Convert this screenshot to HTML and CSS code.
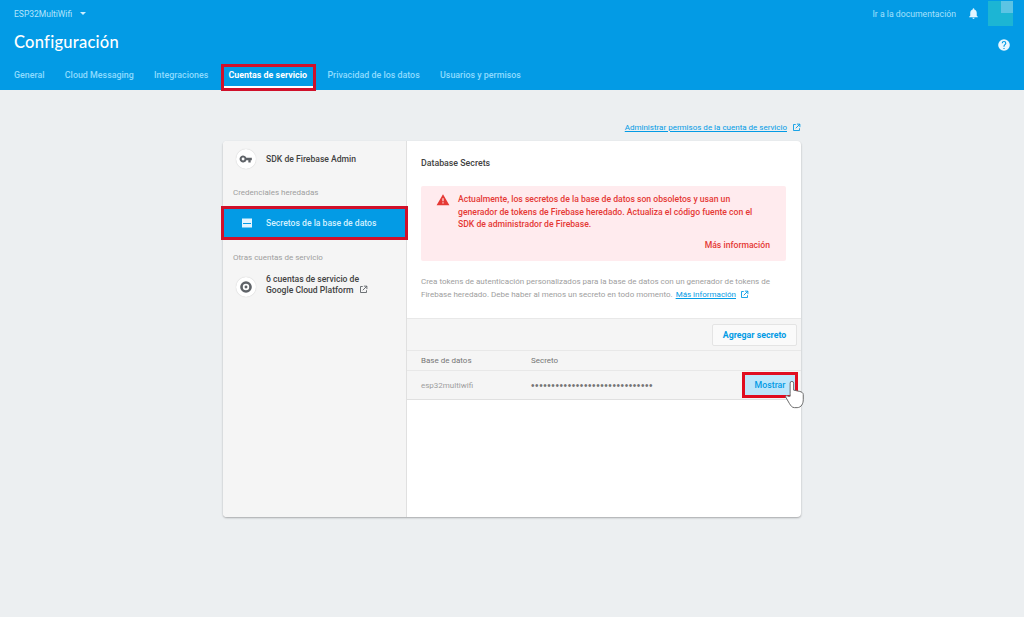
FILE: index.html
```html
<!DOCTYPE html>
<html lang="es">
<head>
<meta charset="utf-8">
<title>Configuración</title>
<link rel="stylesheet" href="styles.css">
</head>
<body>
<header class="topbar">
  <div class="row-top">
    <div class="project">ESP32MultiWifi <span class="caret"></span></div>
    <div class="top-right">
      <span class="docs">Ir a la documentación</span>
      <svg class="bell" viewBox="0 0 24 24"><path fill="#e3f5ff" d="M12 22c1.100 0 2-.9 2-2h-4c0 1.100.9 2 2 2zm6-6v-5c0-3.100-1.600-5.600-4.500-6.300V4a1.500 1.500 0 0 0-3 0v.7C7.600 5.400 6 7.900 6 11v5l-2 2v1h16v-1l-2-2z"/></svg>
      <div class="avatar"><span class="avatar-tile"></span></div>
    </div>
  </div>
  <div class="row-title">
    <h1>Configuración</h1>
    <svg class="help" viewBox="0 0 24 24"><path fill="#e8f7ff" d="M12 2a10 10 0 1 0 0 20 10 10 0 0 0 0-20zm1 17h-2v-2h2v2zm2.100-7.700-.9.9c-.8.7-1.200 1.300-1.200 2.800h-2v-.5c0-1.100.4-2.100 1.200-2.800l1.200-1.300c.4-.3.6-.8.6-1.400a2 2 0 0 0-4 0H8a4 4 0 0 1 8 0c0 .9-.4 1.700-.9 2.300z"/></svg>
  </div>
  <nav class="tabs">
    <span class="tab">General</span>
    <span class="tab">Cloud Messaging</span>
    <span class="tab">Integraciones</span>
    <span class="tab tab-active">Cuentas de servicio</span>
    <span class="tab">Privacidad de los datos</span>
    <span class="tab">Usuarios y permisos</span>
  </nav>
</header>

<main class="content">
  <div class="manage">
    <a class="link">Administrar permisos de la cuenta de servicio</a>
    <svg class="ext" viewBox="0 0 24 24"><path fill="none" stroke="#039be5" stroke-width="2.400" d="M10 4H4v16h16v-6M13 3h8v8M21 3 10 14"/></svg>
  </div>
  <section class="card">
    <aside class="side">
      <div class="side-item side-first">
        <span class="round">
          <svg viewBox="0 0 24 24"><path fill="#5f6368" d="M12.600 10a6 6 0 1 0 0 4H16v4h4v-4h2v-4h-9.400zM7 14.500a2.500 2.500 0 1 1 0-5 2.500 2.500 0 0 1 0 5z"/></svg>
        </span>
        <span class="side-text">SDK de Firebase Admin</span>
      </div>
      <div class="side-label label-a">Credenciales heredadas</div>
      <div class="side-selected">
        <svg viewBox="0 0 24 24"><path fill="#e3f5ff" d="M2 3h20v18H2z"/><path fill="#039be5" d="M4 12h16v2H4z"/></svg>
        <span>Secretos de la base de datos</span>
      </div>
      <div class="side-label label-b">Otras cuentas de servicio</div>
      <div class="side-item side-gcp">
        <span class="round">
          <svg viewBox="0 0 24 24"><path fill="#5f6368" fill-rule="evenodd" d="M12 2a10 10 0 1 1 0 20 10 10 0 0 1 0-20zm0 4.500a5.500 5.500 0 1 0 0 11 5.500 5.500 0 0 0 0-11zm0 3a2.500 2.500 0 1 1 0 5 2.500 2.500 0 0 1 0-5z"/></svg>
        </span>
        <span class="side-text">6 cuentas de servicio de<br>Google Cloud Platform
          <svg class="ext ext-inline" viewBox="0 0 24 24"><path fill="none" stroke="#5f6368" stroke-width="2.400" d="M10 4H4v16h16v-6M13 3h8v8M21 3 10 14"/></svg>
        </span>
      </div>
    </aside>
    <div class="panel">
      <div class="panel-top">
        <h2>Database Secrets</h2>
        <div class="alert">
          <svg class="warn" viewBox="0 0 24 24"><path fill="#e53935" d="M1 21 12 2l11 19H1zm12-3v-2h-2v2h2zm0-4V9h-2v5h2z"/></svg>
          <div class="alert-body">
            <p>Actualmente, los secretos de la base de datos son obsoletos y usan un generador de tokens de Firebase heredado. Actualiza el código fuente con el SDK de administrador de Firebase.</p>
            <div class="alert-more">Más información</div>
          </div>
        </div>
        <div class="note">
          <div>Crea tokens de autenticación personalizados para la base de datos con un generador de tokens de</div>
          <div class="note-line"><span>Firebase heredado. Debe haber al menos un secreto en todo momento.</span><a class="link">Más información</a>
          <svg class="ext" viewBox="0 0 24 24"><path fill="none" stroke="#039be5" stroke-width="2.400" d="M10 4H4v16h16v-6M13 3h8v8M21 3 10 14"/></svg></div>
        </div>
      </div>
      <div class="toolbar"><span class="add">Agregar secreto</span></div>
      <div class="thead">
        <span class="col-db">Base de datos</span>
        <span>Secreto</span>
      </div>
      <div class="trow">
        <span class="col-db">esp32multiwifi</span>
        <span class="dots">••••••••••••••••••••••••••••••</span>
        <span class="show">Mostrar
          <svg class="hand" viewBox="0 0 24 34"><path fill="#fff" stroke="#666" stroke-width="1.100" stroke-linejoin="round" d="M7 16V4a2 2 0 0 1 4 0v8l7 1.500c2 .5 4 1.500 4 3.500v6c0 4-2 9-7 9h-3c-3 0-4-2-6-5l-4-7c-.6-1.500 1.500-2.500 2.500-1L7 19z"/></svg>
        </span>
      </div>
    </div>
  </section>
</main>
</body>
</html>
```
FILE: styles.css
```css
* { box-sizing: border-box; }
html, body { margin: 0; height: 100%; }
body {
  width: 1024px;
  height: 617px;
  overflow: hidden;
  background: #eceff1;
  font-family: Roboto, "Liberation Sans", sans-serif;
  color: #333;
}
svg { display: block; }

.topbar { height: 90px; background: #039be5; color: #fff; padding: 0 14px; }
.row-top { height: 27px; display: flex; justify-content: space-between; align-items: center; }
.project { font-size: 8.500px; color: #b3e5fc; display: flex; align-items: center; gap: 8px; }
.caret { border: 3px solid transparent; border-top: 3px solid #cdeefe; border-bottom: 0; }
.top-right { display: flex; align-items: center; margin-right: -3px; }
.docs { font-size: 8.700px; color: #a6e1fc; }
.bell { width: 13px; height: 13px; margin-left: 11px; }
.avatar { width: 25px; height: 25px; margin-left: 8px; background: #1cb5d4; position: relative; }
.avatar-tile { position: absolute; right: 0; top: 0; width: 12px; height: 12px; background: #5cc4e4; }

.row-title { height: 33px; display: flex; justify-content: space-between; align-items: center; padding-bottom: 3px; }
h1 { margin: 0; font-family: Lato, Roboto, sans-serif; font-size: 16.500px; font-weight: 500; color: #fff; letter-spacing: .25px; }
.help { width: 14px; height: 14px; margin-right: -1px; margin-top: 5px; }

.tabs { display: flex; height: 30px; align-items: stretch; gap: 20.300px; }
.tab { font-size: 8.900px; font-weight: 500; color: #8fdcff; display: flex; align-items: center; padding-bottom: 1px; white-space: nowrap; position: relative; }
.tab-active { color: #fff; font-weight: 700; }
.tab-active::before { content: ""; position: absolute; left: -6px; right: -7px; bottom: 2px; height: 2px; background: #fff; }
.tab-active::after { content: ""; position: absolute; left: -8px; right: -9px; top: 4px; bottom: -1px; border: 3px solid #d0102a; }

.content { width: 578px; margin: 0 auto; padding-top: 32px; }
.manage { display: flex; justify-content: flex-end; align-items: center; gap: 5px; height: 11px; margin-bottom: 8px; font-size: 8px; }
.link { color: #039be5; text-decoration: underline; }
.ext { width: 9px; height: 9px; display: inline-block; vertical-align: -1px; }

.card { display: flex; height: 376px; background: #fff; border-radius: 4px; box-shadow: 0 1px 2px rgba(0,0,0,.3); }
.side { width: 184px; flex: none; background: #f5f5f5; border-right: 1px solid #e0e0e0; border-radius: 4px 0 0 4px; }
.side-item { display: flex; align-items: center; gap: 10px; padding: 0 13px; font-size: 8.600px; font-weight: 500; color: #424242; line-height: 11px; }
.side-first { height: 35px; padding-top: 1px; }
.side-gcp { height: 45px; margin-top: 1px; padding-bottom: 3px; }
.round { width: 20px; height: 20px; border-radius: 50%; background: #fff; display: flex; align-items: center; justify-content: center; flex: none; box-shadow: 0 0 1px rgba(0,0,0,.25); }
.round svg { width: 14px; height: 14px; }
.side-gcp .round { margin-top: 3px; }
.ext-inline { margin-left: 3px; }
.side-label { font-size: 8px; color: #9e9e9e; padding-left: 10px; height: 11px; line-height: 11px; }
.label-a { margin-top: 11px; }
.label-b { margin-top: 14px; }
.side-selected { margin-top: 10px; position: relative; height: 30px; width: 183px; background: #039be5; color: #d4f1ff; outline: 3px solid #d0102a; outline-offset: -1px; display: flex; align-items: center; gap: 13px; padding-left: 18px; font-size: 8.600px; font-weight: 500; white-space: nowrap; }
.side-selected svg { width: 12px; height: 12px; }

.panel { flex: 1; min-width: 0; display: flex; flex-direction: column; }
.panel-top { height: 177px; padding: 17px 15px 0 14px; flex: none; }
h2 { margin: 0; font-size: 8.800px; font-weight: 500; color: #424242; line-height: 11px; }
.alert { margin-top: 17px; height: 75px; background: #ffebee; border-radius: 2px; display: flex; padding: 7px 15px 0 15px; gap: 8px; }
.warn { width: 14px; height: 14px; flex: none; }
.alert-body { flex: 1; min-width: 0; font-size: 8.650px; line-height: 12.500px; font-weight: 500; color: #e53935; }
.alert-body p { margin: 0; max-width: 306px; }
.alert-more { text-align: right; margin-top: 8px; padding-right: 1px; }
.note { margin-top: 15px; font-size: 8px; line-height: 12.500px; color: #9e9e9e; white-space: nowrap; }
.note-line { display: flex; align-items: center; gap: 4px; }
.note-line span { margin-right: -1px; }

.toolbar { height: 33px; flex: none; background: #f5f5f5; border-top: 1px solid #e8e8e8; border-bottom: 1px solid #e8e8e8; display: flex; justify-content: flex-end; align-items: center; padding-right: 4px; }
.add { height: 22px; width: 85px; display: flex; align-items: center; justify-content: center; background: #fafafa; border: 1px solid #e4e4e4; border-radius: 2px; font-size: 8.800px; font-weight: 700; color: #039be5; }
.thead, .trow { display: flex; align-items: center; font-size: 8px; color: #757575; padding-left: 14px; }
.thead { height: 20px; background: #f5f5f5; border-bottom: 1px solid #e8e8e8; }
.trow { height: 29px; background: #f5f5f5; border-bottom: 1px solid #e0e0e0; color: #9e9e9e; position: relative; }
.col-db { width: 110px; }
.dots { font-family: "Liberation Sans", sans-serif; font-size: 10px; letter-spacing: .57px; color: #757575; }
.show { position: absolute; right: 4px; top: 2px; height: 24px; width: 54px; display: flex; align-items: center; justify-content: center; background: #bde6fb; outline: 3px solid #e00d20; outline-offset: -2px; font-size: 8.800px; font-weight: 500; color: #039be5; }
.hand { position: absolute; left: 41px; top: 6px; width: 21px; height: 31px; }
```
